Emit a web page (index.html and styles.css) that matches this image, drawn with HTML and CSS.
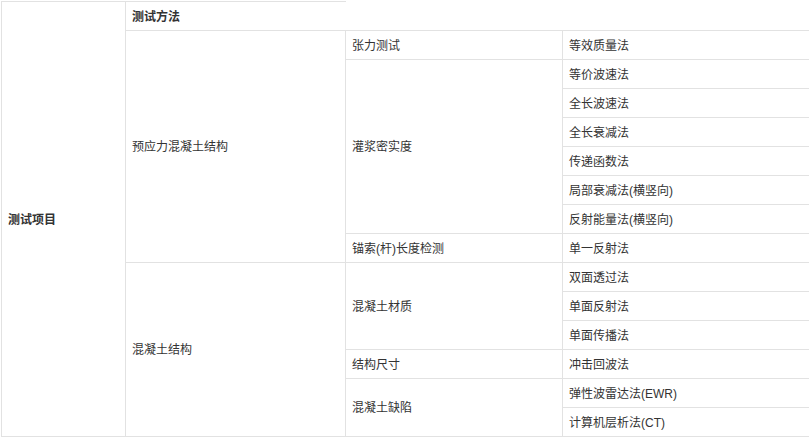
FILE: index.html
```html
<!DOCTYPE html>
<html lang="zh">
<head>
<meta charset="utf-8">
<link rel="stylesheet" href="styles.css">
</head>
<body>
<table class="grid">
  <colgroup>
    <col class="c1"><col class="c2"><col class="c3"><col class="c4">
  </colgroup>
  <tr>
    <th rowspan="15" class="head">测试项目</th>
    <th class="head head-method">测试方法</th>
  </tr>
  <tr><td rowspan="8">预应力混凝土结构</td><td>张力测试</td><td>等效质量法</td></tr>
  <tr><td rowspan="6">灌浆密实度</td><td>等价波速法</td></tr>
  <tr><td>全长波速法</td></tr>
  <tr><td>全长衰减法</td></tr>
  <tr><td>传递函数法</td></tr>
  <tr><td>局部衰减法(横竖向)</td></tr>
  <tr><td>反射能量法(横竖向)</td></tr>
  <tr><td>锚索(杆)长度检测</td><td>单一反射法</td></tr>
  <tr><td rowspan="6">混凝土结构</td><td rowspan="3">混凝土材质</td><td>双面透过法</td></tr>
  <tr><td>单面反射法</td></tr>
  <tr><td>单面传播法</td></tr>
  <tr><td>结构尺寸</td><td>冲击回波法</td></tr>
  <tr><td rowspan="2">混凝土缺陷</td><td>弹性波雷达法(EWR)</td></tr>
  <tr><td>计算机层析法(CT)</td></tr>
</table>
</body>
</html>
```

FILE: styles.css
```css
html, body {
  margin: 0;
  padding: 0;
  background: #ffffff;
}
body {
  padding: 1px 0 0 1px;
  font-family: "Liberation Sans", "Noto Sans CJK SC", sans-serif;
  font-size: 12px;
  color: #333333;
}
.grid {
  border-collapse: collapse;
  table-layout: fixed;
  width: 808px;
  border: none;
}
.c1 { width: 124px; }
.c2 { width: 220px; }
.c3 { width: 217px; }
.c4 { width: 247px; }
.grid th,
.grid td {
  border: 1px solid #e2e2e2;
  padding: 1px 6px 0;
  height: 27px;
  line-height: 16px;
  text-align: left;
  vertical-align: middle;
  font-weight: normal;
  white-space: nowrap;
}
.grid th.head {
  font-weight: bold;
}
.grid th.head-method {
  border-right: none;
}
```
